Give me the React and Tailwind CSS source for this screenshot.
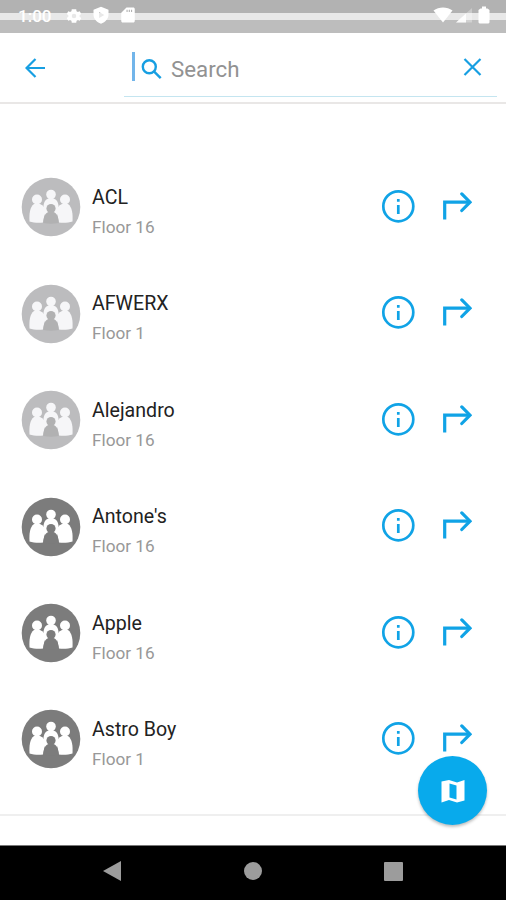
import React, { useState } from 'react';

const places = [
  { id: 1, name: 'ACL', floor: 'Floor 16', active: false },
  { id: 2, name: 'AFWERX', floor: 'Floor 1', active: false },
  { id: 3, name: 'Alejandro', floor: 'Floor 16', active: false },
  { id: 4, name: 'Antone\'s', floor: 'Floor 16', active: true },
  { id: 5, name: 'Apple', floor: 'Floor 16', active: true },
  { id: 6, name: 'Astro Boy', floor: 'Floor 1', active: true },
];

const GroupAvatar = ({ active }) => (
  <svg viewBox="0 0 60 60" className={active ? 'w-[60px] h-[60px] text-[#7c7c7c]' : 'w-[60px] h-[60px] text-[#bcbcbe]'}>
    <circle cx="30" cy="30" r="29.3" fill="currentColor" />
    <g fill={active ? '#ffffff' : '#f6f6f8'}>
      <circle cx="30" cy="17.500" r="4.800" />
      <path d="M22.500 30c0-5 2-7.500 5-8.500h5c3 1 5 3.500 5 8.500l-1.500 8h-12z" />
      <circle cx="16" cy="22.500" r="5" />
      <circle cx="44" cy="22.500" r="5" />
      <path d="M8.500 44.500c-.4-8 .3-14.500 4.500-17.500h6c3.500 1.500 5 4 5.500 7.500L22 45.500c-4 .6-10 .2-13.500-1z" />
      <path d="M51.500 44.500c.4-8-.3-14.500-4.500-17.500h-6c-3.500 1.500-5 4-5.500 7.500L38 45.500c4 .6 10 .2 13.500-1z" />
    </g>
    <g className={active ? 'text-[#7c7c7c]' : 'text-[#b1b1b2]'} fill="currentColor">
      <circle cx="30" cy="31.500" r="4.600" />
      <path d="M22.300 46c0-6.500 2-10 5.200-11h5c3.200 1 5.200 4.500 5.200 11-5 1-10.400 1-15.400 0z" />
    </g>
  </svg>
);

const InfoIcon = () => (
  <svg viewBox="0 0 34 34" className="w-[34px] h-[34px]" fill="none" stroke="currentColor">
    <circle cx="17.300" cy="17.300" r="15" strokeWidth="2.700" />
    <path d="M17.300 16v9M17.300 10v2.700" strokeWidth="2.700" />
  </svg>
);

const DirectionIcon = () => (
  <svg viewBox="0 0 32 32" className="w-8 h-8" fill="none" stroke="currentColor" strokeWidth="3.200">
    <path d="M4.700 29.500V12.200H29.500" />
    <path d="M21.800 3.900l8.200 8.300-8.200 8.300" strokeLinecap="round" />
  </svg>
);

const StatusBar = () => (
  <div className="h-[33px] flex flex-col shrink-0 bg-[#bdbdbd] relative">
    <div className="h-[13px] bg-[#b2b2b2]"></div>
    <div className="h-[7px] bg-[#e8e8e8]"></div>
    <div className="absolute inset-x-0 top-0 h-8 flex items-center pl-[18px] pr-4 text-white">
      <span className="w-[47px] text-[17px] font-medium leading-8">1:00</span>
      <svg viewBox="0 0 24 24" className="w-[18px] h-[18px] mr-[9px] -mt-px" fill="currentColor">
        <path fillRule="evenodd" d="M19.430 13c.1-.6.1-1.400 0-2l2.200-1.700-2-3.500-2.600 1c-.5-.4-1.100-.8-1.700-1L15 3H9l-.4 2.800c-.6.2-1.200.6-1.700 1l-2.600-1-2 3.500L4.500 11c-.1.600-.1 1.400 0 2l-2.200 1.700 2 3.500 2.600-1c.5.4 1.100.8 1.700 1L9 21h6l.4-2.800c.6-.2 1.200-.6 1.700-1l2.600 1 2-3.500zM12 15a3 3 0 1 1 0-6 3 3 0 0 1 0 6z" />
      </svg>
      <svg viewBox="0 0 24 24" className="w-[18px] h-[18px] mr-[9px] -mt-[2px]" fill="currentColor">
        <path fillRule="evenodd" d="M12 1L2 5v6c0 6 4 10.500 10 12.500C18 21.500 22 17 22 11V5zM9.500 8l7 4-7 4z" />
      </svg>
      <svg viewBox="0 0 24 24" className="w-[18px] h-[18px] -mt-[2px]" fill="currentColor">
        <path fillRule="evenodd" d="M19 2H10L3 9v11c0 1.200.8 2 2 2h14c1.200 0 2-.8 2-2V4c0-1.200-.8-2-2-2zM10 5h1.500v3H10zm3 0h1.500v3H13zM16 5h1.500v3H16z" />
      </svg>
      <div className="ml-auto flex items-center -mt-[2px]">
        <svg viewBox="0 0 20 16" className="w-[20px] h-4" fill="currentColor">
          <path d="M.5 3.500C6-.5 14-.5 19.500 3.500L10 15.500z" />
        </svg>
        <svg viewBox="0 0 18 16" className="w-[18px] h-4 ml-[2px]" fill="currentColor">
          <path d="M1 15.500L17 1v14.500z" fillOpacity=".3" />
          <path d="M1 15.500L11 6.400v9.100z" fillOpacity=".9" />
        </svg>
        <svg viewBox="0 0 12 18" className="w-3 h-[18px] ml-[5px]" fill="currentColor">
          <path d="M4 .5h4v2h1.500L11.500 4v12.500l-1 1h-9l-1-1V4l2-1.500H4z" />
        </svg>
      </div>
    </div>
  </div>
);

const SearchHeader = ({ query, setQuery }) => (
  <header className="h-[71px] shrink-0 flex items-start border-b-2 border-[#e9e7e6] pl-[25px] pr-[9px]">
    <button className="mt-[24px] text-[#179fe2]">
      <svg viewBox="0 0 22 22" className="w-[22px] h-[22px]" fill="none" stroke="currentColor" strokeWidth="2.200">
        <path d="M20 11H2.500M10.500 2L1.500 11l9 9" />
      </svg>
    </button>
    <div className="ml-[77px] flex-1 h-[64px] flex items-start border-b border-[#c4e5f0] pl-2">
      <div className="w-[3px] h-[29px] mt-[19px] bg-[#72b5ea]"></div>
      <svg viewBox="0 0 22 22" className="w-[22px] h-[22px] mt-[25px] ml-[6px] text-[#179fe2]" fill="none" stroke="currentColor" strokeWidth="2.400">
        <circle cx="8.300" cy="8.800" r="6.500" />
        <path d="M12.900 13.400l6.800 6.800" />
      </svg>
      <input
        value={query}
        onChange={(e) => setQuery(e.target.value)}
        placeholder="Search"
        className="ml-2 mt-[21px] w-[200px] h-8 text-[22.3px] outline-none placeholder:text-[#929292]"
      />
      <button onClick={() => setQuery('')} className="ml-auto mr-[15px] mt-[24px] text-[#179fe2]">
        <svg viewBox="0 0 20 20" className="w-5 h-5" fill="none" stroke="currentColor" strokeWidth="2.200">
          <path d="M2.500 2l16 16M18.500 2l-16 16" />
        </svg>
      </button>
    </div>
  </header>
);

const PlaceRow = ({ place }) => (
  <li className="h-[106.4px] flex items-center pl-[21px] pr-[34px]">
    <GroupAvatar active={place.active} />
    <div className="ml-[11px] mt-[10px] flex-1">
      <h3 className="text-[19.6px] leading-[30px] text-[#222222]">{place.name}</h3>
      <p className="text-[17.2px] leading-[29px] text-[#989898]">{place.floor}</p>
    </div>
    <div className="flex items-center gap-[25px] text-[#10a3e6] -mt-[3px]">
      <InfoIcon />
      <DirectionIcon />
    </div>
  </li>
);

const App = () => {
  const [query, setQuery] = useState('');
  const visible = places.filter((p) => p.name.toLowerCase().includes(query.toLowerCase()));

  return (
    <div className="relative w-full h-[900px] flex flex-col overflow-hidden bg-white font-['Roboto',sans-serif]">
      <StatusBar />
      <SearchHeader query={query} setQuery={setQuery} />
      <main className="h-[712px] shrink-0 pt-[50.3px] border-b-2 border-[#efefef]">
        <ul>
          {visible.map((place) => (
            <PlaceRow key={place.id} place={place} />
          ))}
        </ul>
      </main>
      <div className="flex-1"></div>

      {/* Map button */}
      <button className="absolute left-[418px] top-[756px] w-[69px] h-[69px] rounded-full bg-[#08aaec] text-white flex items-center justify-center shadow-[0_2px_3px_rgba(0,0,0,0.25)]">
        <svg viewBox="0 0 24 24" className="w-[24px] h-[24px]" fill="currentColor">
          <path fillRule="evenodd" d="M.5 2.500L8 1l8 2.500L23.500 1v20.500L16 23.500l-8-2.500L.5 23.500zM8.500 4.500v14l7 2V6.500z" />
        </svg>
      </button>

      <nav className="h-[55px] shrink-0 flex items-center bg-black border-t border-[#777777] text-[#9c9c9c]">
        <svg viewBox="0 0 18 20" className="w-[18px] h-5 ml-[103px] -mt-[4px]" fill="currentColor">
          <path d="M18 0v20L0 10z" />
        </svg>
        <div className="w-[18px] h-[18px] rounded-full bg-[#9c9c9c] ml-[123px] -mt-[4px]"></div>
        <div className="w-[19px] h-[19px] rounded-[1px] bg-[#9c9c9c] ml-[122px] -mt-[4px]"></div>
      </nav>
    </div>
  );
};

export default App;
